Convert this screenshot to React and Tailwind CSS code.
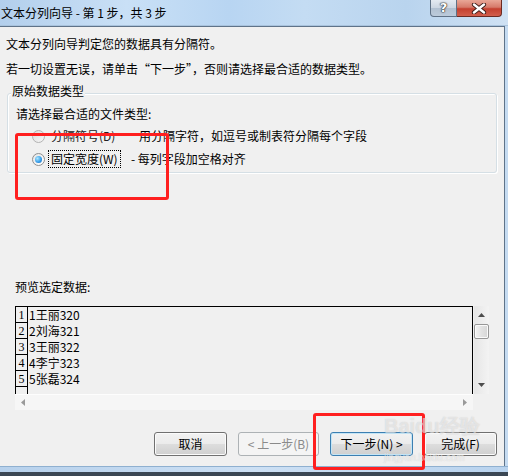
import React from "react";

const rows = ["1王丽320", "2刘海321", "3王丽322", "4李宁323", "5张磊324"];

function Btn({ children, w, variant }) {
  const base =
    "h-[24px] flex items-center justify-center rounded-[3px] border text-[12px] leading-[16px] shrink-0";
  let cls = "";
  if (variant === "disabled") {
    cls = "border-[#adb2b5] bg-[#f4f4f4] text-[#8a8a8a]";
  } else if (variant === "default") {
    cls =
      "border-[#3c7fb1] bg-[linear-gradient(#f2f2f2_0%,#ebebeb_50%,#dddddd_51%,#cfcfcf_100%)] shadow-[inset_0_0_0_1px_#c4e5f6] text-black";
  } else {
    cls =
      "border-[#707070] bg-[linear-gradient(#f2f2f2_0%,#ebebeb_50%,#dddddd_51%,#cfcfcf_100%)] shadow-[inset_0_0_0_1px_#fbfbfb] text-black";
  }
  return (
    <div className={`${base} ${cls} ${w}`}>{children}</div>
  );
}

export default function App() {
  return (
    <div className="relative w-[508px] h-[476px] overflow-hidden flex flex-col bg-[#c3daf1] font-['Noto_Sans_CJK_SC','Noto_Sans',sans-serif] text-[12px] leading-[16px] text-black">
      {/* Title bar */}
      <div className="h-[26px] shrink-0 flex items-start bg-[linear-gradient(90deg,#b3cfec_0%,#c9e0f6_25%,#b8d5f2_45%,#c4dcf3_60%,#b9d4ee_80%,#cfe1f3_100%)] border-b border-[#a9c3dd]">
        <div className="pl-[1px] pt-[5px] text-[12px] leading-[16px] text-black whitespace-pre">
          文本分列向导 - 第 1 步，共 3 步
        </div>
        <div className="ml-auto mr-[6px] flex">
          <div className="w-[27px] h-[17px] rounded-bl-[4px] border border-t-0 border-[#5f7186] bg-[linear-gradient(#e4eaf1_0%,#ccd6e2_50%,#b1c0d1_51%,#bccbdb_100%)] flex items-center justify-center text-white font-bold text-[13px] leading-[14px] font-['DejaVu_Sans',sans-serif] [text-shadow:0_0_1px_#222,0_0_1px_#222,0_0_2px_#333]">
            ?
          </div>
          <div className="w-[45px] h-[17px] rounded-br-[4px] border border-t-0 border-l-0 border-[#6b2a22] bg-[linear-gradient(#e9a797_0%,#d67a6a_45%,#c4402f_55%,#d25f4d_100%)] flex items-center justify-center">
            <svg width="16" height="11" viewBox="0 0 16 11">
              <path d="M3 1.5 L13 9.5 M13 1.5 L3 9.5" stroke="#3a1a16" strokeWidth="4.2" strokeLinecap="round" />
              <path d="M3 1.5 L13 9.5 M13 1.5 L3 9.5" stroke="#ffffff" strokeWidth="2.4" strokeLinecap="round" />
            </svg>
          </div>
        </div>
      </div>

      {/* Body */}
      <div className="flex-1 flex min-h-0">
        <div className="w-[505px] shrink-0 flex flex-col bg-[#f0f0f0] border-t border-r border-[#5f7389]">
          <div className="mt-[9px] pl-[6px] h-[16px]">文本分列向导判定您的数据具有分隔符。</div>
          <div className="mt-[9px] pl-[6px] h-[16px]">
            若一切设置无误，请单击“下一步”，否则请选择最合适的数据类型。
          </div>

          {/* Group box */}
          <div className="relative mt-[16px] ml-[7px] w-[490px] border border-[#d5dfe5] rounded-[3px] shadow-[inset_1px_1px_0_#ffffff,1px_1px_0_#ffffff] pt-[12px] pl-[8px] pb-[4px]">
            <div className="absolute left-[3px] -top-[11px] px-[1px] bg-[#f0f0f0] h-[16px]">原始数据类型</div>
            <div className="h-[16px]">请选择最合适的文件类型:</div>

            <div className="mt-[6px] h-[16px] flex items-center">
              <div className="w-[115px] shrink-0 flex items-center">
                <div className="ml-[16px] w-[13px] h-[13px] rounded-full border border-[#b3b3b3] bg-[linear-gradient(135deg,#dcdcdc,#f7f7f7)] shrink-0" />
                <div className="ml-[3px] px-[2px] border border-transparent h-[16px] leading-[14px] text-[#222]">分隔符号(D)</div>
              </div>
              <div className="pl-[8px]">用分隔字符，如逗号或制表符分隔每个字段</div>
            </div>

            <div className="mt-[6px] h-[18px] flex items-center">
              <div className="w-[115px] shrink-0 flex items-center">
                <div className="ml-[16px] w-[13px] h-[13px] rounded-full border border-[#8e8f8f] bg-[linear-gradient(135deg,#e6e6e6,#ffffff)] flex items-center justify-center shrink-0">
                  <div className="w-[7px] h-[7px] rounded-full bg-[radial-gradient(circle_at_35%_35%,#aee8ff_0%,#3aa0ea_55%,#0f5fb8_100%)]" />
                </div>
                <div className="ml-[3px] px-[2px] border border-dotted border-black h-[18px] leading-[16px]">固定宽度(W)</div>
              </div>
              <div className="whitespace-pre">- 每列字段加空格对齐</div>
            </div>
          </div>

          <div className="mt-[106px] ml-[15px] h-[16px]">预览选定数据:</div>

          {/* Preview */}
          <div className="mt-[11px] ml-[15px] w-[474px] h-[104px] flex">
            <div className="w-[458px] flex flex-col">
              <div className="h-[88px] border-t border-l border-r border-black flex overflow-hidden">
                <div className="w-[12px] border-r border-black flex flex-col shrink-0">
                  {["1", "2", "3", "4", "5", ""].map((n, i) => (
                    <div
                      key={i}
                      className="h-[16px] shrink-0 border-b border-black flex items-end justify-center font-['Liberation_Serif',serif] text-[12px] leading-[13px]"
                    >
                      {n}
                    </div>
                  ))}
                </div>
                <div className="flex flex-col pl-[1px]">
                  {rows.map((r) => (
                    <div key={r} className="h-[16px] leading-[16px]">{r}</div>
                  ))}
                </div>
              </div>
              <div className="h-[16px] bg-[#f6f6f6] border-t border-[#fdfdfd] flex items-center justify-between px-[6px]">
                <svg width="4" height="7" viewBox="0 0 4 7"><path d="M4 0 L0 3.5 L4 7 Z" fill="#9a9a9a" /></svg>
                <svg width="4" height="7" viewBox="0 0 4 7"><path d="M0 0 L4 3.5 L0 7 Z" fill="#9a9a9a" /></svg>
              </div>
            </div>
            <div className="ml-[1px] w-[15px] flex flex-col">
              <div className="h-[88px] bg-[linear-gradient(90deg,#e6e6e6,#f3f3f3)] flex flex-col items-center">
                <div className="h-[18px] flex items-center justify-center">
                  <svg width="7" height="4" viewBox="0 0 7 4"><path d="M0 4 L3.5 0 L7 4 Z" fill="#4d4d4d" /></svg>
                </div>
                <div className="w-[15px] h-[15px] rounded-[2px] border border-[#979797] bg-[linear-gradient(90deg,#f4f4f4,#e2e2e2_50%,#d6d6d6)] shadow-[inset_0_0_0_1px_#fafafa]" />
                <div className="mt-auto h-[18px] flex items-center justify-center">
                  <svg width="7" height="4" viewBox="0 0 7 4"><path d="M0 0 L7 0 L3.5 4 Z" fill="#4d4d4d" /></svg>
                </div>
              </div>
            </div>
          </div>

          {/* Buttons */}
          <div className="mt-[22px] ml-[154px] flex gap-[11px]">
            <Btn w="w-[73px]">取消</Btn>
            <Btn w="w-[81px]" variant="disabled">&lt; 上一步(B)</Btn>
            <Btn w="w-[83px]" variant="default">下一步(N) &gt;</Btn>
            <Btn w="w-[73px]">完成(F)</Btn>
          </div>
        </div>
        <div className="flex-1 bg-[#c5dbf1]" />
      </div>
      <div className="h-[6px] shrink-0 bg-[linear-gradient(90deg,#b7d1ec,#cde0f4_50%,#b9d3ee)] border-t border-[#8fb0d0]" />
      <div className="h-[4px] shrink-0 bg-[#3b4754]" />

      {/* Annotation overlays */}
      <div className="absolute left-[15px] top-[133px] w-[154px] h-[67px] border-[3px] border-[#ff1f1f] rounded-[3px] pointer-events-none" />
      <div className="absolute left-[313px] top-[413px] w-[112px] h-[57px] border-[3px] border-[#ff1f1f] rounded-[3px] pointer-events-none" />

      {/* Watermark */}
      <div className="absolute left-[384px] top-[414px] text-[20px] leading-[24px] font-bold font-['Liberation_Sans',sans-serif] text-white/50 [text-shadow:0_0_1px_rgba(120,120,120,0.35)] pointer-events-none">
        Baidu经验
      </div>
      <div className="absolute left-[384px] top-[452px] text-[10px] leading-[12px] font-['Liberation_Sans',sans-serif] text-white/60 [text-shadow:0_0_1px_rgba(120,120,120,0.35)] pointer-events-none">
        jingyan.baidu.com
      </div>
    </div>
  );
}
